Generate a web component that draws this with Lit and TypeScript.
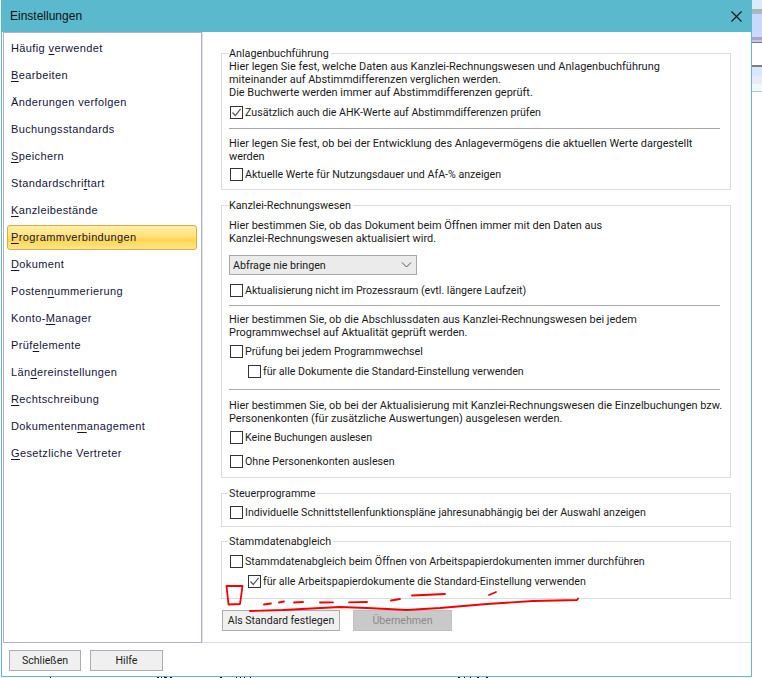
import { LitElement, html, css, svg } from "lit";
import { customElement } from "lit/decorators.js";

const NAV: [string, string, string][] = [
  ["Häufig ", "v", "erwendet"],
  ["", "B", "earbeiten"],
  ["Änderungen verfolgen", "", ""],
  ["Buchungsstandards", "", ""],
  ["", "S", "peichern"],
  ["Standardschri", "f", "tart"],
  ["", "K", "anzleibestände"],
  ["", "P", "rogrammverbindungen"],
  ["", "D", "okument"],
  ["Posten", "n", "ummerierung"],
  ["Konto-", "M", "anager"],
  ["Prüf", "e", "lemente"],
  ["Län", "d", "ereinstellungen"],
  ["", "R", "echtschreibung"],
  ["Dokumenten", "m", "anagement"],
  ["", "G", "esetzliche Vertreter"],
];

const BANDS = ["b1", "b2", "b3", "b4", "b5", "b6", "b7", "b8", "b9", "b10", "b11", "b12", "b13"];

const check = (label: string, checked = false, cls = "") => html`
  <div class="check ${cls}">
    <span class="box">
      ${checked
        ? html`<svg width="11" height="11" viewBox="0 0 11 11"><path d="M1.5 5.5 L4.3 8.5 L9.6 1.8" fill="none" stroke="#555" stroke-width="1.2"/></svg>`
        : ""}
    </span>
    <span>${label}</span>
  </div>
`;

@customElement("app-root")
export class AppRoot extends LitElement {
  static styles = css`
    :host {
      display: block;
      position: relative;
      width: 762px;
      height: 678px;
      background: #fff;
      overflow: hidden;
      font-family: "Roboto", "Liberation Sans", Arial, sans-serif;
      font-size: 10.95px;
      line-height: 13px;
      color: #1a1a1a;
      white-space: nowrap;
    }
    .page { display: flex; align-items: flex-start; padding-left: 1px; }
    .win {
      width: 751px;
      height: 677px;
      box-sizing: border-box;
      border: 1px solid #62b8cd;
      border-top: 0;
      display: flex;
      flex-direction: column;
      background: #fff;
    }
    .title {
      height: 31px;
      margin: 0 -1px;
      background: #5ab9cc;
      display: flex;
      align-items: center;
      justify-content: space-between;
      padding: 1px 10px 0 9px;
      color: #111;
      font-family: "Liberation Sans", Arial, sans-serif;
      font-size: 12px;
      flex: none;
    }
    .body { display: flex; height: 611px; flex: none; }
    .nav {
      width: 199px;
      box-sizing: border-box;
      margin-left: 1px;
      border: 1px solid #b3b3c6;
      padding: 3px 4px 0 3px;
      display: flex;
      flex-direction: column;
      gap: 2px;
      flex: none;
    }
    .item {
      height: 25px;
      box-sizing: border-box;
      border: 1px solid transparent;
      border-radius: 3px;
      padding-left: 3px;
      display: flex;
      align-items: center;
      white-space: pre;
      font-family: "Liberation Sans", Arial, sans-serif;
      font-size: 11px;
      letter-spacing: 0.38px;
      color: #14143a;
    }
    .item u { text-underline-offset: 2px; }
    .item.sel {
      border-color: #dcab46;
      background: linear-gradient(#ffeea6 0%, #ffe27c 45%, #ffd54f 60%, #ffe68a 100%);
    }
    .panel {
      flex: 1;
      min-width: 0;
      width: 0;
      border-left: 1px solid #e2e2e2;
      border-bottom: 1px solid #dcdcdc;
      padding: 15px 20px 0 18px;
      display: flex;
      flex-direction: column;
      gap: 9px;
    }
    fieldset {
      margin: 0;
      padding: 0 10px 0 7px;
      border: 1px solid #dcdcdc;
      min-width: 0;
    }
    legend { padding: 0 2px 0 0; margin: 0; height: 13px; font-size: 10.75px; }
    .g1 { padding-bottom: 5px; }
    .g2 { padding-bottom: 6px; }
    .g3 { padding-bottom: 4px; }
    .g4 { padding-bottom: 7px; margin-top: -1px; }
    .check { height: 20px; display: flex; align-items: center; gap: 2px; padding-left: 1px; font-size: 10.65px; }
    .check.sub { padding-left: 19px; }
    .box {
      width: 11px;
      height: 11px;
      border: 1px solid #333;
      background: #fff;
      flex: none;
      display: block;
    }
    .box svg { display: block; }
    .sep { height: 1px; background: #a9a9a9; }
    .m1 { margin-top: 1px; }
    .m2 { margin-top: 2px; }
    .m3 { margin-top: 3px; }
    .m4 { margin-top: 4px; }
    .m5 { margin-top: 5px; }
    .m6 { margin-top: 6px; }
    .m7 { margin-top: 7px; }
    .m8 { margin-top: 8px; }
    .m9 { margin-top: 9px; }
    .m10 { margin-top: 10px; }
    .select {
      width: 188px;
      height: 20px;
      box-sizing: border-box;
      border: 1px solid #a8a8a8;
      background: #ebebeb;
      display: flex;
      align-items: center;
      justify-content: space-between;
      padding: 0 4px 0 3px;
      font-size: 10.7px;
    }
    .actions { display: flex; gap: 13px; margin-top: 2px; padding-left: 1px; }
    .btn {
      height: 21px;
      box-sizing: border-box;
      border: 1px solid #adadad;
      background: #f0f0f0;
      display: flex;
      align-items: center;
      justify-content: center;
      color: #222;
      font-size: 10.6px;
    }
    .std { width: 118px; }
    .apply { width: 99px; background: #c9c9c9; border-color: #c0c0c0; color: #8a8a8a; }
    .foot { flex: 1; display: flex; gap: 9px; padding: 7px 0 0 7px; }
    .close { width: 72px; }
    .help { width: 73px; }
    .strip { width: 10px; display: flex; flex-direction: column; flex: none; }
    .strip div { flex: none; }
    .b1 { height: 9px; background: #dcebfb; }
    .b2 { height: 3px; background: #a4bcb0; }
    .b3 { height: 2px; background: #a8b8d4; }
    .b4 { height: 23px; background: #c9d9f9; }
    .b5 { height: 3px; background: #a8a8c8; }
    .b6 { height: 2px; background: #c2c9ec; }
    .b7 { height: 1px; background: #777; }
    .b8 { height: 22px; background: #fff; }
    .b9 { height: 2px; background: #777c88; }
    .b10 { height: 9px; background: #d8e8fc; }
    .b11 { height: 8px; background: #ece8f8; }
    .b12 { height: 7px; background: #e8fcfc; }
    .b13 { height: 1px; background: #c4c4c4; }
    .marks { position: absolute; left: 0; top: 0; pointer-events: none; }
  `;

  render() {
    return html`
      <div class="page">
        <div class="win">
          <div class="title">
            <span>Einstellungen</span>
            <svg width="11" height="11" viewBox="0 0 11 11"><path d="M0.5 0.5 L10.5 10.5 M10.5 0.5 L0.5 10.5" stroke="#111" stroke-width="1.1" fill="none"/></svg>
          </div>
          <div class="body">
            <div class="nav">
              ${NAV.map(
                ([a, u, b], i) =>
                  html`<div class="item ${i === 7 ? "sel" : ""}"><span>${a}${u ? html`<u>${u}</u>` : ""}${b}</span></div>`
              )}
            </div>
            <div class="panel">
              <fieldset class="g1">
                <legend>Anlagenbuchführung</legend>
                <div>Hier legen Sie fest, welche Daten aus Kanzlei-Rechnungswesen und Anlagenbuchführung</div>
                <div>miteinander auf Abstimmdifferenzen verglichen werden.</div>
                <div>Die Buchwerte werden immer auf Abstimmdifferenzen geprüft.</div>
                <div class="m3">${check("Zusätzlich auch die AHK-Werte auf Abstimmdifferenzen prüfen", true)}</div>
                <div class="sep m6"></div>
                <div class="m8">Hier legen Sie fest, ob bei der Entwicklung des Anlagevermögens die aktuellen Werte dargestellt</div>
                <div>werden</div>
                <div class="m1">${check("Aktuelle Werte für Nutzungsdauer und AfA-% anzeigen")}</div>
              </fieldset>
              <fieldset class="g2">
                <legend>Kanzlei-Rechnungswesen</legend>
                <div class="m7">Hier bestimmen Sie, ob das Dokument beim Öffnen immer mit den Daten aus</div>
                <div>Kanzlei-Rechnungswesen aktualisiert wird.</div>
                <div class="select m10">
                  <span>Abfrage nie bringen</span>
                  <svg width="11" height="6" viewBox="0 0 11 6"><path d="M1 0.5 L5.5 5 L10 0.5" fill="none" stroke="#555" stroke-width="1"/></svg>
                </div>
                <div class="m5">${check("Aktualisierung nicht im Prozessraum (evtl. längere Laufzeit)")}</div>
                <div class="sep m5"></div>
                <div class="m7">Hier bestimmen Sie, ob die Abschlussdaten aus Kanzlei-Rechnungswesen bei jedem</div>
                <div>Programmwechsel auf Aktualität geprüft werden.</div>
                <div class="m2">${check("Prüfung bei jedem Programmwechsel")}</div>
                ${check("für alle Dokumente die Standard-Einstellung verwenden", false, "sub")}
                <div class="sep m8"></div>
                <div class="m9">Hier bestimmen Sie, ob bei der Aktualisierung mit Kanzlei-Rechnungswesen die Einzelbuchungen bzw.</div>
                <div>Personenkonten (für zusätzliche Auswertungen) ausgelesen werden.</div>
                <div class="m2">${check("Keine Buchungen auslesen")}</div>
                <div class="m4">${check("Ohne Personenkonten auslesen")}</div>
              </fieldset>
              <fieldset class="g3">
                <legend>Steuerprogramme</legend>
                <div class="m2">${check("Individuelle Schnittstellenfunktionspläne jahresunabhängig bei der Auswahl anzeigen")}</div>
              </fieldset>
              <fieldset class="g4">
                <legend>Stammdatenabgleich</legend>
                <div class="m3">${check("Stammdatenabgleich beim Öffnen von Arbeitspapierdokumenten immer durchführen")}</div>
                ${check("für alle Arbeitspapierdokumente die Standard-Einstellung verwenden", true, "sub")}
              </fieldset>
              <div class="actions">
                <div class="btn std">Als Standard festlegen</div>
                <div class="btn apply">Übernehmen</div>
              </div>
            </div>
          </div>
          <div class="foot">
            <div class="btn close">Schließen</div>
            <div class="btn help">Hilfe</div>
          </div>
        </div>
        <div class="strip">${BANDS.map((b) => html`<div class=${b}></div>`)}</div>
      </div>
      <svg class="marks" width="762" height="678" viewBox="0 0 762 678">
        ${svg`
          <g fill="none" stroke="#f40000" stroke-width="1.8" stroke-linecap="round" stroke-linejoin="round">
            <path d="M226.5 586 L242.5 586 L240 604 L228.5 604.5 Z"/>
            <path d="M250 611 L283 610 L340 607 L367 608 L407 610 L440 608 L487 604 L533 601 L577 600 L578 598.5"/>
            <path d="M264 604.5 L271 603.5"/>
            <path d="M279 602.5 L284 601.5"/>
            <path d="M294 602.5 L303 602"/>
            <path d="M320 602.5 L333 602.3"/>
            <path d="M349 602.3 L367 602"/>
            <path d="M391 600.5 L400 599"/>
            <path d="M412 595.5 L445 594"/>
            <path d="M489 595 L496 592"/>
          </g>
          <path d="M50 677h1M157 677h2M161 677h1M164 677h3M170 677h2M220 677h2M236 677h1M240 677h1M244 677h1M250 677h1M458 677h2M464 677h1M470 677h1M477 677h2M486 677h2" stroke="#111" stroke-width="1" transform="translate(0 .5)"/>
        `}
      </svg>
    `;
  }
}
